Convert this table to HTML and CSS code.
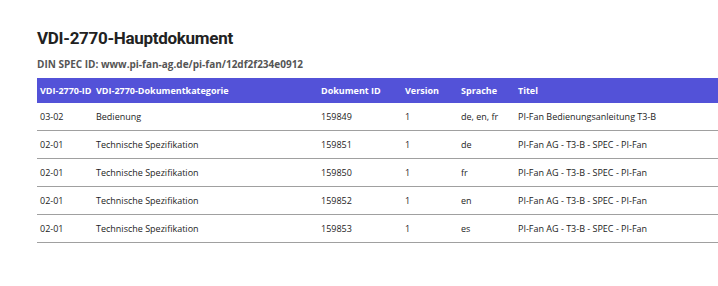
FILE: index.html
```html
<!DOCTYPE html>
<html lang="de">
<head>
<meta charset="utf-8">
<title>VDI-2770-Hauptdokument</title>
<link rel="stylesheet" href="styles.css">
</head>
<body>
<main class="page">
  <h1 class="title">VDI-2770-Hauptdokument</h1>
  <p class="spec">DIN SPEC ID: www.pi-fan-ag.de/pi-fan/12df2f234e0912</p>
  <table class="docs">
    <colgroup>
      <col class="c-id"><col class="c-cat"><col class="c-doc"><col class="c-ver"><col class="c-lang"><col class="c-title">
    </colgroup>
    <thead>
      <tr><th>VDI-2770-ID</th><th>VDI-2770-Dokumentkategorie</th><th>Dokument ID</th><th>Version</th><th>Sprache</th><th>Titel</th></tr>
    </thead>
    <tbody>
      <tr><td>03-02</td><td>Bedienung</td><td>159849</td><td>1</td><td>de, en, fr</td><td>PI-Fan Bedienungsanleitung T3-B</td></tr>
      <tr><td>02-01</td><td>Technische Spezifikation</td><td>159851</td><td>1</td><td>de</td><td>PI-Fan AG - T3-B - SPEC - PI-Fan</td></tr>
      <tr><td>02-01</td><td>Technische Spezifikation</td><td>159850</td><td>1</td><td>fr</td><td>PI-Fan AG - T3-B - SPEC - PI-Fan</td></tr>
      <tr><td>02-01</td><td>Technische Spezifikation</td><td>159852</td><td>1</td><td>en</td><td>PI-Fan AG - T3-B - SPEC - PI-Fan</td></tr>
      <tr><td>02-01</td><td>Technische Spezifikation</td><td>159853</td><td>1</td><td>es</td><td>PI-Fan AG - T3-B - SPEC - PI-Fan</td></tr>
    </tbody>
  </table>
</main>
</body>
</html>
```
FILE: styles.css
```css
html, body {
  margin: 0;
  padding: 0;
  background: #ffffff;
  overflow: hidden;
}
body {
  font-family: "Open Sans", "DejaVu Sans", sans-serif;
  color: #222222;
}
.page {
  padding: 26px 0 0 37px;
}
.title {
  margin: 0;
  font-family: Roboto, "Open Sans", sans-serif;
  font-size: 17px;
  letter-spacing: -0.3px;
  line-height: 24px;
  font-weight: 700;
  color: #222222;
}
.spec {
  margin: 7px 0 0;
  font-size: 10px;
  line-height: 14px;
  font-weight: 700;
  color: #555555;
}
.docs {
  margin-top: 7px;
  border-collapse: collapse;
  table-layout: fixed;
  width: 700px;
  font-size: 9px;
}
.c-id { width: 56px; }
.c-cat { width: 225px; }
.c-doc { width: 84px; }
.c-ver { width: 56px; }
.c-lang { width: 57px; }
.c-title { width: 222px; }
.docs th {
  background: #5352d8;
  color: #ffffff;
  font-weight: 700;
  text-align: left;
  height: 25px;
  padding: 0 3px;
  white-space: nowrap;
}
.docs td {
  height: 27px;
  padding: 0 3px;
  border-bottom: 1px solid #a0a0a0;
  white-space: nowrap;
  color: #1c1c1c;
}
```
